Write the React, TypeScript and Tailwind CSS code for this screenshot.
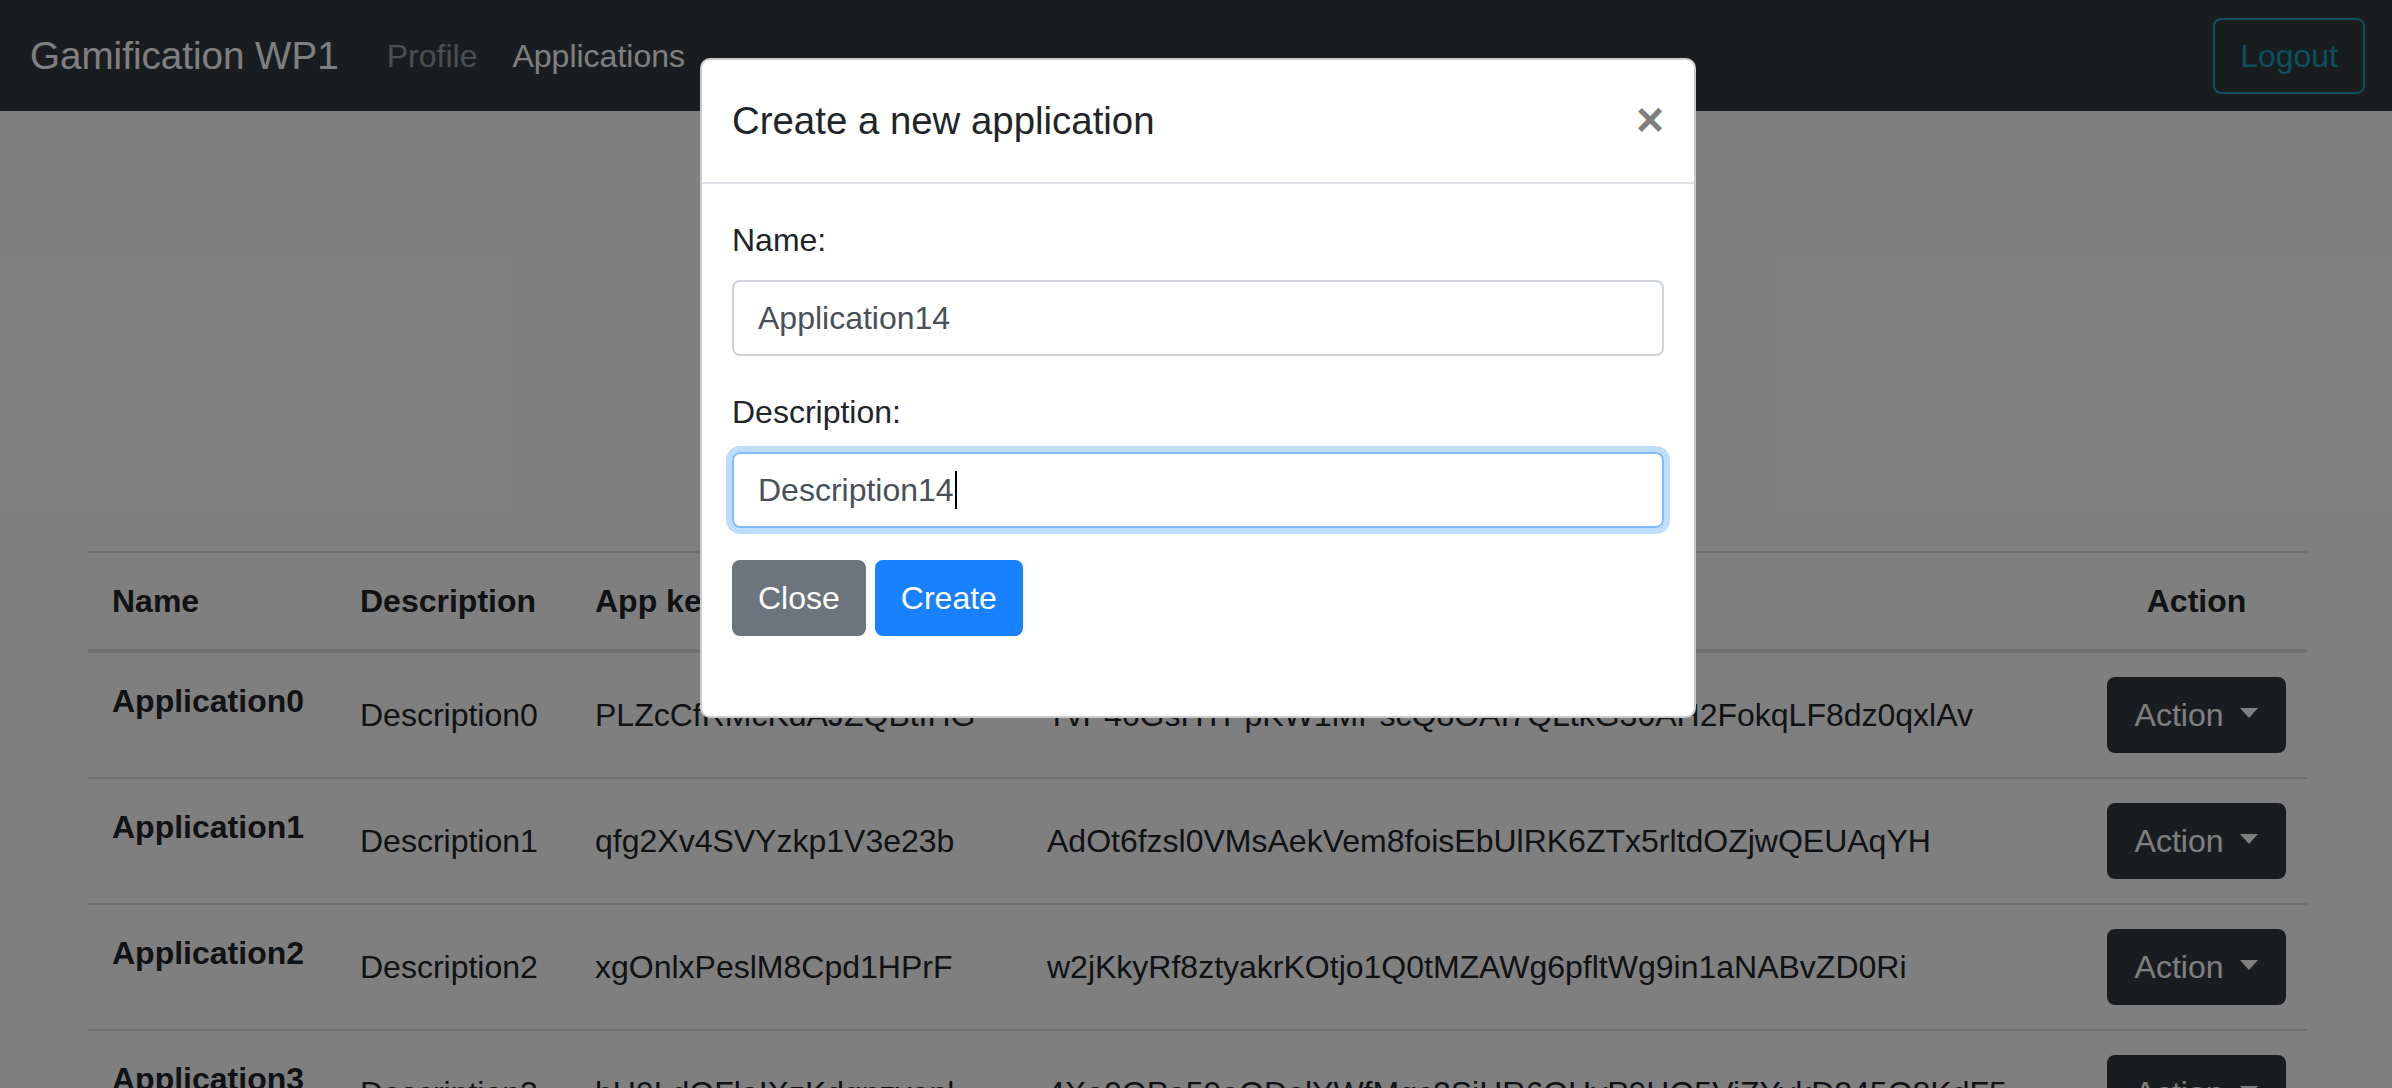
import React from "react";

const rows = [
  ["Application0", "Description0", "PLZcCfRMcKdAJZQBtIHG", "TvP46GsHTPpKW1MPscQ8OAI7QLtkG30AH2FokqLF8dz0qxlAv"],
  ["Application1", "Description1", "qfg2Xv4SVYzkp1V3e23b", "AdOt6fzsl0VMsAekVem8foisEbUlRK6ZTx5rltdOZjwQEUAqYH"],
  ["Application2", "Description2", "xgOnlxPeslM8Cpd1HPrF", "w2jKkyRf8ztyakrKOtjo1Q0tMZAWg6pfltWg9in1aNABvZD0Ri"],
  ["Application3", "Description3", "bU9LdQFlaIXzKdqnzvonl", "4Xe0OPe59eQDelYWfMqc2SiHR6OHyP9HQ5ViZYvkD245O8KdF5"],
  ["Application4", "Description4", "Zk2pQwLm8Rt5Yx1Nc7Vb", "Hq8Lm2Xc9Vb4Nn1Kk7Jj3Gg6Ff5Dd0Ss2Aa8Pp4Oo1Ii9Uu7Yy3"],
];

function ActionButton() {
  return (
    <button className="inline-flex items-center h-[76px] px-[26px] rounded-[8px] bg-[#343a40] border-2 border-[#343a40] text-white text-[32px] leading-[48px]">
      <span>Action&nbsp;</span>
      <span className="ml-[8px] -translate-y-[2px] w-0 h-0 border-t-[10px] border-t-white border-x-[9.5px] border-x-transparent" />
    </button>
  );
}

export default function App() {
  return (
    <div className="relative h-[1088px] w-full overflow-hidden bg-white text-[#212529] font-['Liberation_Sans',Arial,sans-serif]">
      {/* Navbar */}
      <nav className="h-[111px] bg-[#343a40] flex items-center pl-[30px] pr-[27px]">
        <span className="text-[38.6px] leading-[60px] text-white mr-[32px]">Gamification WP1</span>
        <span className="text-[32px] leading-[48px] px-[16px] text-white/50">Profile</span>
        <span className="text-[32px] leading-[48px] pl-[19px] pr-[16px] text-white">Applications</span>
        <div className="flex-1" />
        <button className="h-[76px] px-[25px] rounded-[8px] border-2 border-[#17a2b8] text-[#17a2b8] text-[32px] leading-[48px]">
          Logout
        </button>
      </nav>

      {/* Content */}
      <div className="w-[2219px] ml-[88px] mt-[440px]">
        <table className="w-full table-fixed border-collapse text-[32px] leading-[48px]">
          <colgroup>
            <col className="w-[248px]" />
            <col className="w-[235px]" />
            <col className="w-[452px]" />
            <col className="w-[1063px]" />
            <col className="w-[221px]" />
          </colgroup>
          <thead>
            <tr>
              <th className="text-left font-bold p-[24px] border-t-2 border-b-4 border-[#dee2e6] align-bottom">Name</th>
              <th className="text-left font-bold p-[24px] border-t-2 border-b-4 border-[#dee2e6] align-bottom">Description</th>
              <th className="text-left font-bold p-[24px] border-t-2 border-b-4 border-[#dee2e6] align-bottom">App key</th>
              <th className="text-left font-bold p-[24px] border-t-2 border-b-4 border-[#dee2e6] align-bottom">App secret</th>
              <th className="text-center font-bold p-[24px] border-t-2 border-b-4 border-[#dee2e6] align-bottom">Action</th>
            </tr>
          </thead>
          <tbody>
            {rows.map((r) => (
              <tr key={r[0]}>
                <th className="text-left font-bold p-[24px] border-t-2 border-[#dee2e6] align-top whitespace-nowrap">{r[0]}</th>
                <td className="p-[24px] border-t-2 border-[#dee2e6] align-middle whitespace-nowrap">{r[1]}</td>
                <td className="p-[24px] border-t-2 border-[#dee2e6] align-middle whitespace-nowrap">{r[2]}</td>
                <td className="p-[24px] border-t-2 border-[#dee2e6] align-middle whitespace-nowrap">{r[3]}</td>
                <td className="py-[24px] px-0 border-t-2 border-[#dee2e6] align-middle text-center">
                  <ActionButton />
                </td>
              </tr>
            ))}
          </tbody>
        </table>
      </div>

      {/* Backdrop */}
      <div className="absolute inset-0 bg-black/50" />

      {/* Modal */}
      <div className="absolute left-[700px] top-[58px] w-[996px] bg-white border-2 border-black/20 rounded-[10px]">
        <div className="flex items-start justify-between px-[30px] py-[32px] border-b-2 border-[#dee2e6]">
          <h5 className="text-[38.4px] leading-[57.6px] font-normal text-[#212529]">Create a new application</h5>
          <button className="p-[32px] -m-[32px] mt-[-28px] ml-auto text-[48px] leading-[48px] font-bold text-black opacity-50">
            ×
          </button>
        </div>
        <div className="px-[30px] pt-[32px] pb-[80px]">
          <div className="mb-[32px]">
            <div className="text-[32px] leading-[48px] mb-[16px]">Name:</div>
            <div className="h-[76px] border-2 border-[#ced4da] rounded-[8px] px-[24px] flex items-center text-[32px] leading-[48px] text-[#495057]">
              Application14
            </div>
          </div>
          <div className="mb-[32px]">
            <div className="text-[32px] leading-[48px] mb-[16px]">Description:</div>
            <div className="h-[76px] border-2 border-[#80bdff] rounded-[8px] px-[24px] flex items-center text-[32px] leading-[48px] text-[#495057] shadow-[0_0_0_6px_rgba(0,123,255,0.25)]">
              Description14
              <span className="inline-block w-[2px] h-[38px] bg-black ml-[1px]" />
            </div>
          </div>
          <div className="flex gap-[9px]">
            <button className="h-[76px] px-[24px] rounded-[8px] bg-[#6c757d] border-2 border-[#6c757d] text-white text-[32px] leading-[48px]">
              Close
            </button>
            <button className="h-[76px] px-[24px] rounded-[8px] bg-[#1781ff] border-2 border-[#1781ff] text-white text-[32px] leading-[48px]">
              Create
            </button>
          </div>
        </div>
      </div>
    </div>
  );
}
